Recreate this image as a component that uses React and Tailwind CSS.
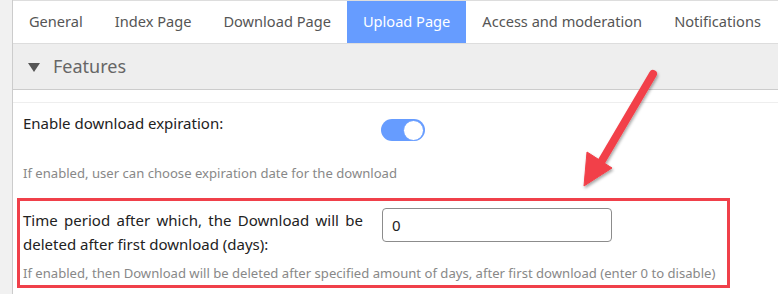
import React from "react";

const tabs = ["General", "Index Page", "Download Page", "Upload Page", "Access and moderation", "Notifications"];

export default function App() {
  return (
    <div className="relative flex w-[778px] h-[294px] overflow-hidden bg-white font-['Noto_Sans',sans-serif]">
      <div className="w-[13px] shrink-0 bg-[#f1f1f1] border-r border-[#cccccc]" />
      <div className="flex-1 flex flex-col">
        <div className="flex h-[44px] border-t border-b border-[#dddddd]">
          {tabs.map((t) => (
            <div
              key={t}
              className={
                t === "Upload Page"
                  ? "px-4 flex items-center whitespace-nowrap text-[14.6px] text-white bg-[#669cff]"
                  : "px-4 flex items-center whitespace-nowrap text-[14.6px] text-[#555555]"
              }
            >
              {t}
            </div>
          ))}
        </div>
        <div className="flex items-center h-[46px] bg-[#eeeeee] border-b border-[#cccccc] pl-[15px]">
          <svg width="12" height="9" viewBox="0 0 12 9" className="mr-[13px] mt-[1px]">
            <polygon points="0,0 12,0 6,9" fill="#555555" />
          </svg>
          <span className="text-[18px] text-[#666666]">Features</span>
        </div>
        <div className="h-[12px]" />
        <div className="border-t border-[#eeeeee] pl-[10px] pt-[8px]">
          <div className="flex items-start">
            <div className="w-[358px] text-[15px] leading-[24px] text-[#222222]">Enable download expiration:</div>
            <div className="mt-[8px] w-[44px] h-[22px] rounded-full bg-[#669cff] flex items-center justify-end pr-[1px]">
              <div className="w-[21px] h-[21px] rounded-full bg-white border border-[#669cff]" />
            </div>
          </div>
          <div className="mt-[23px] text-[13.1px] leading-[18px] text-[#888888]">
            If enabled, user can choose expiration date for the download
          </div>
        </div>
        <div className="ml-[4px] mt-[16px] w-[713px] border-[3px] border-[#f0404a] pl-[3px] pt-[7px] pb-[3px]">
          <div className="flex items-start">
            <div className="w-[340px] text-[15px] leading-[24px] text-[#222222] text-justify">
              Time period after which, the Download will be deleted after first download (days):
            </div>
            <div className="ml-[19px] w-[230px] h-[34px] rounded-[4px] border border-[#8c8c8c] flex items-center px-[9px] text-[15px] text-[#222222]">
              0
            </div>
          </div>
          <div className="mt-[8px] text-[13.1px] leading-[18px] text-[#888888] whitespace-nowrap">
            If enabled, then Download will be deleted after specified amount of days, after first download (enter 0 to disable)
          </div>
        </div>
      </div>
      <svg className="absolute left-0 top-0 pointer-events-none" width="778" height="294" viewBox="0 0 778 294">
        <defs>
          <filter id="sh" x="-20%" y="-20%" width="140%" height="140%">
            <feDropShadow dx="1" dy="2" stdDeviation="1.5" floodColor="#000" floodOpacity="0.35" />
          </filter>
        </defs>
        <g filter="url(#sh)" fill="#f2414a" stroke="#f2414a">
          <line x1="653" y1="74" x2="600" y2="164" strokeWidth="8" strokeLinecap="round" />
          <polygon points="584,186 587,152 612,168" strokeWidth="1" strokeLinejoin="round" />
        </g>
      </svg>
    </div>
  );
}
